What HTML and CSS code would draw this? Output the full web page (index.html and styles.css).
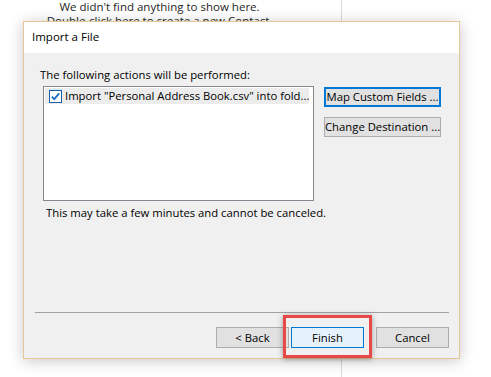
FILE: index.html
```html
<!DOCTYPE html>
<html>
<head>
<meta charset="utf-8">
<link rel="stylesheet" href="styles.css">
</head>
<body>
<div class="app">
  <div class="app-pane">
    <div class="empty-line">We didn't find anything to show here.</div>
    <div class="empty-line">Double-click here to create a new Contact.</div>
  </div>
  <div class="app-side"></div>
</div>

<div class="dialog">
  <div class="title">Import a File</div>
  <div class="content">
    <div class="label">The following actions will be performed:</div>
    <div class="main-row">
      <div class="listbox">
        <div class="list-item">
          <span class="check">
            <svg width="13" height="13" viewBox="0 0 13 13">
              <rect x="0.5" y="0.5" width="12" height="12" fill="#ffffff" stroke="#1a5ea8"/>
              <path d="M2.8 6.6 L5.2 9.2 L10.2 3.4" fill="none" stroke="#1f6fc4" stroke-width="1.8"/>
            </svg>
          </span>
          <span class="item-text">Import "Personal Address Book.csv" into fold...</span>
        </div>
      </div>
      <div class="side-buttons">
        <div class="btn btn-default">Map Custom Fields ...</div>
        <div class="btn">Change Destination ...</div>
      </div>
    </div>
    <div class="note">This may take a few minutes and cannot be canceled.</div>
    <div class="spacer"></div>
    <div class="separator"></div>
    <div class="footer">
      <div class="btn btn-foot btn-back">&lt; Back</div>
      <div class="btn btn-foot btn-focus">Finish</div>
      <div class="btn btn-foot btn-cancel">Cancel</div>
    </div>
  </div>
  <div class="highlight"></div>
</div>
</body>
</html>
```
FILE: styles.css
```css
html, body {
  margin: 0;
  padding: 0;
  background: #ffffff;
  width: 491px;
  height: 377px;
  overflow: hidden;
  font-family: "Open Sans", "Noto Sans", "Liberation Sans", sans-serif;
  font-size: 11.3px;
  color: #000;
}

.app {
  display: flex;
  height: 377px;
}

.app-pane {
  width: 341px;
  border-right: 1px solid #d9d9d9;
  text-align: center;
  color: #262626;
  font-size: 11.5px;
  line-height: 14px;
}

.empty-line {
  margin-right: 22px;
}

.app-side {
  flex: 1;
}

.dialog {
  position: absolute;
  left: 23px;
  top: 21px;
  width: 435px;
  height: 336px;
  border: 1px solid #e3c796;
  background: #f0f0f0;
  box-shadow: 0 2px 14px rgba(0, 0, 0, 0.22);
  display: flex;
  flex-direction: column;
}

.title {
  height: 31px;
  background: #ffffff;
  padding-left: 8px;
  line-height: 29px;
  font-size: 11.5px;
}

.content {
  flex: 1;
  display: flex;
  flex-direction: column;
  padding: 14px 10px 10px 11px;
}

.label {
  padding-left: 5px;
  line-height: 16px;
  height: 16px;
}

.main-row {
  display: flex;
  margin-top: 3px;
  padding-left: 8px;
}

.listbox {
  width: 268px;
  height: 112px;
  border: 1px solid #828790;
  background: #ffffff;
  padding: 1px 0 0 1px;
  box-sizing: content-box;
}

.list-item {
  display: flex;
  align-items: center;
  height: 16px;
  width: 264px;
  background: #ececec;
}

.check {
  width: 16px;
  height: 14px;
  background: #cce8ff;
  display: flex;
  align-items: center;
  justify-content: center;
  margin-left: 4px;
}

.check svg {
  display: block;
}

.item-text {
  margin-left: 3px;
  white-space: nowrap;
  line-height: 16px;
}

.side-buttons {
  display: flex;
  flex-direction: column;
  gap: 10px;
  margin-left: 10px;
  margin-top: 1px;
}

.btn {
  box-sizing: border-box;
  width: 117px;
  height: 20px;
  border: 1px solid #adadad;
  background: #e1e1e1;
  line-height: 18px;
  text-align: center;
  white-space: nowrap;
}

.btn-default {
  border: 2px solid #0078d7;
  line-height: 16px;
}

.note {
  padding-left: 11px;
  margin-top: 4px;
  line-height: 16px;
}

.spacer {
  flex: 1;
}

.separator {
  height: 1px;
  background: #a0a0a0;
  margin: 0 0 14px 0;
}

.footer {
  display: flex;
  justify-content: flex-end;
}

.btn-foot {
  width: 73px;
  height: 21px;
  line-height: 19px;
  text-align: center;
}

.btn-focus {
  margin-left: 2px;
  background: #e5f1fb;
  border-color: #0078d7;
}

.btn-cancel {
  margin-left: 12px;
}

.highlight {
  position: absolute;
  left: 259px;
  top: 293px;
  width: 83px;
  height: 37px;
  border: 3px solid #e84848;
  box-shadow: 0 1px 6px rgba(0, 0, 0, 0.35);
}
```
